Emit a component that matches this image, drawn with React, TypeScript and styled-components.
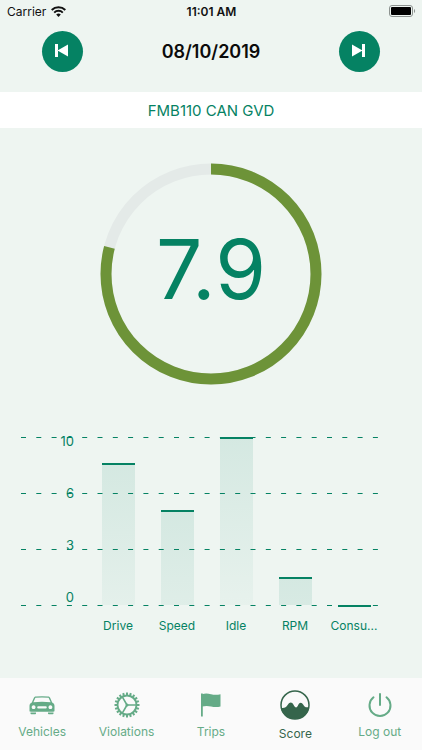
import React from "react";
import styled, { createGlobalStyle } from "styled-components";

const green = "#058263";
const mint = "#65ab87";
const forest = "#35654b";

const Global = createGlobalStyle`
  * { box-sizing: border-box; }
  body { margin: 0; background: #eef5f1; font-family: Inter, "Liberation Sans", sans-serif; }
  button { font: inherit; border: 0; padding: 0; cursor: pointer; }
`;

const Screen = styled.div`
  min-height: 100vh;
  display: flex;
  flex-direction: column;
  background: #eef5f1;
`;

const StatusBar = styled.div`
  display: grid;
  grid-template-columns: 1fr auto 1fr;
  align-items: center;
  height: 22px;
  padding: 0 6px 0 7px;
  font-size: 12px;
  color: #111;
`;

const Carrier = styled.span`
  display: flex;
  align-items: center;
  gap: 5px;
`;

const Clock = styled.span`
  font-weight: 600;
`;

const Battery = styled.svg`
  justify-self: end;
`;

const DateNav = styled.header`
  display: flex;
  justify-content: space-between;
  align-items: center;
  padding: 9px 42px 20px;
`;

const RoundButton = styled.button`
  width: 41px;
  height: 41px;
  border-radius: 50%;
  background: ${green};
  color: #fff;
  display: grid;
  place-items: center;
  padding: 0 2px 2px 0;
`;

const DateTitle = styled.h1`
  margin: 0;
  font-size: 18px;
  line-height: 24px;
  font-weight: 600;
  color: #0b0b0b;
`;

const DeviceName = styled.h2`
  margin: 0;
  padding-top: 2px;
  background: #fff;
  color: ${green};
  font-size: 15px;
  font-weight: 400;
  line-height: 34px;
  text-align: center;
`;

const Main = styled.main`
  flex: 1;
  display: flex;
  flex-direction: column;
  align-items: center;
  padding-top: 35px;
`;

const Gauge = styled.div`
  display: grid;
  place-items: center;
  > * { grid-area: 1 / 1; }
`;

const GaugeValue = styled.span`
  color: ${green};
  font-size: 82px;
  line-height: 96px;
  font-weight: 400;
  margin-bottom: 9px;
`;

const Chart = styled.svg`
  display: block;
  width: 100%;
  margin-top: 39px;
  font-size: 12px;
  fill: ${green};
`;

const AxisLabel = styled.text`
  font-size: 13px;
  text-anchor: end;
`;

const TabBar = styled.nav`
  display: grid;
  grid-template-columns: repeat(5, 1fr);
  height: 72px;
  background: #fafafa;
`;

const Tab = styled.button<{ $active?: boolean }>`
  display: flex;
  flex-direction: column;
  align-items: center;
  gap: ${(p) => (p.$active ? 6 : 4)}px;
  padding-top: 12px;
  background: none;
  color: ${(p) => (p.$active ? forest : mint)};
`;

const TabIcon = styled.span`
  display: grid;
  place-items: center;
  height: 30px;
`;

const TabLabel = styled.span`
  font-size: 12px;
  line-height: 16px;
`;

const bars = [
  { label: "Drive", top: 40 },
  { label: "Speed", top: 87 },
  { label: "Idle", top: 14 },
  { label: "RPM", top: 154 },
  { label: "Consu...", top: 182 },
];

const gridLines = [
  { y: 13, label: "10", labelY: 22 },
  { y: 69, label: "6", labelY: 74 },
  { y: 125, label: "3", labelY: 126 },
  { y: 181, label: "0", labelY: 178 },
];

const BarChart = () => (
  <Chart viewBox="0 0 422 215" role="img" aria-label="Score by category">
    <defs>
      {bars.map((b) => (
        <linearGradient
          key={b.label}
          id={`fade-${b.top}`}
          gradientUnits="userSpaceOnUse"
          x1="0"
          y1={b.top}
          x2="0"
          y2={b.top + 168}
        >
          <stop offset="0" stopColor={green} stopOpacity="0.11" />
          <stop offset="1" stopColor={green} stopOpacity="0.03" />
        </linearGradient>
      ))}
    </defs>
    {bars.map((b, i) => (
      <g key={b.label}>
        <rect x={102 + i * 59} y={b.top} width="33" height={Math.max(0, 181 - b.top)} fill={`url(#fade-${b.top})`} />
        <rect x={102 + i * 59} y={b.top - 1} width="33" height="2" />
        <text x={118 + i * 59} y="206" textAnchor="middle">{b.label}</text>
      </g>
    ))}
    {gridLines.map((g) => (
      <g key={g.y}>
        <path d={`M21 ${g.y}.5H378`} fill="none" stroke={green} strokeWidth="1" strokeDasharray="5 10.3" />
        <AxisLabel x="74" y={g.labelY}>{g.label}</AxisLabel>
      </g>
    ))}
  </Chart>
);

const radius = 105;
const circumference = 2 * Math.PI * radius;

const ScoreGauge = ({ value }: { value: number }) => (
  <Gauge>
    <svg width="222" height="222" viewBox="0 0 222 222" fill="none" strokeWidth="11">
      <circle cx="111" cy="111" r={radius} stroke="#e4eae8" />
      <circle
        cx="111"
        cy="111"
        r={radius}
        stroke="#6d9338"
        strokeDasharray={`${(circumference * value) / 10} ${circumference}`}
        transform="rotate(-90 111 111)"
      />
    </svg>
    <GaugeValue>{value}</GaugeValue>
  </Gauge>
);

const CarIcon = () => (
  <svg width="26" height="19" viewBox="0 0 26 19" fill="currentColor">
    <path fillRule="evenodd" d="M5 1.600C5.400.8 6 .5 7 .4Q13-.1 19 .4c1 .1 1.600.4 2 1.200l2.200 4.800C25 7.200 25.500 8.500 25.500 10v4.500c0 .8-.4 1.200-1.200 1.200H1.700C.9 15.700.5 15.300.5 14.500V10C.5 8.500 1 7.200 2.800 6.400ZM6.400 1.700 4.400 6.200Q13 5.400 21.600 6.200L19.600 1.700Q13 1.100 6.400 1.700ZM4.600 9.300a1.900 1.900 0 1 0 .01 0ZM21.400 9.300a1.900 1.900 0 1 0 .01 0ZM9.300 10.300a1 1 0 0 0 0 2.200h7.400a1 1 0 0 0 0-2.200Z" />
    <path d="M1.500 16.500h5.500v1c0 .5-.3.800-.8.800H2.300c-.5 0-.8-.3-.8-.8ZM19 16.500h5.500v1c0 .5-.3.800-.8.800h-3.900c-.5 0-.8-.3-.8-.8Z" />
  </svg>
);

const teeth = Array.from({ length: 20 }, (_, i) => i * 18);

const GearIcon = () => (
  <svg width="26" height="26" viewBox="-13 -13 26 26" fill="none" stroke="currentColor" strokeWidth="1.900">
    <circle r="9.500" />
    {teeth.map((a) => (
      <path key={a} d="M0-9.500V-12.500" strokeWidth="2" transform={`rotate(${a})`} />
    ))}
    <path d="M0 0H9.500M0 0-4.700-8.200M0 0-4.700 8.200" strokeWidth="1.600" />
    <circle r="1.500" fill="currentColor" stroke="none" />
  </svg>
);

const FlagIcon = () => (
  <svg width="20" height="24" viewBox="0 0 20 24" fill="currentColor">
    <path d="M0 .5h1.800v23H0Z" />
    <path d="M1 1.200C4 .2 7 .4 10 1.200s6 .8 9.500.1V13.600c-3.500.8-6.500.6-9.500-.1S4 12.800 1 13.600Z" />
  </svg>
);

const WaveIcon = () => (
  <svg width="30" height="30" viewBox="0 0 30 30">
    <circle cx="15" cy="15" r="14" fill="none" stroke="currentColor" strokeWidth="1.500" />
    <path fill="currentColor" d="M1 18C4.500 18.500 6 17.500 7.800 14.800 9.800 11.700 12 12 13.500 14.800c2 3.700 3.200 3.700 4.800 0 1.200-2.800 3.500-2.800 5 0C24.800 17.500 26 17.600 29 17.200 28 25 22 29 15 29S2.500 25 1 18Z" />
  </svg>
);

const PowerIcon = () => (
  <svg width="26" height="26" viewBox="0 0 26 26" fill="none" stroke="currentColor" strokeWidth="2" strokeLinecap="round">
    <path d="M13 2V13M6.500 5.300A10.500 10.500 0 1 0 19.500 5.300" />
  </svg>
);

const SkipIcon = ({ forward }: { forward?: boolean }) => (
  <svg width="13" height="13" viewBox="0 0 13 13" fill="currentColor">
    <path d={forward ? "M0 0.500 10.500 6.500 0 12.500ZM10 0h3v13h-3Z" : "M13 0.500 2.500 6.500 13 12.500ZM0 0h3v13H0Z"} />
  </svg>
);

const tabs = [
  { label: "Vehicles", Icon: CarIcon },
  { label: "Violations", Icon: GearIcon },
  { label: "Trips", Icon: FlagIcon },
  { label: "Score", Icon: WaveIcon, active: true },
  { label: "Log out", Icon: PowerIcon },
];

export default function App() {
  return (
    <Screen>
      <Global />
      <StatusBar>
        <Carrier>
          Carrier
          <svg width="15" height="11" viewBox="0 0 15 11" fill="none" stroke="#111" strokeWidth="2">
            <path d="M.7 4a9.700 9.700 0 0 1 13.600 0M3.200 6.600a6.200 6.200 0 0 1 8.600 0" />
            <path d="M5.200 8.500a3.300 3.300 0 0 1 4.600 0L7.500 10.900Z" fill="#111" stroke="none" />
          </svg>
        </Carrier>
        <Clock>11:01 AM</Clock>
        <Battery width="27" height="12" viewBox="0 0 27 12">
          <rect x=".5" y=".5" width="23" height="11" rx="2.500" fill="none" stroke="#8d9390" />
          <rect x="2" y="2" width="20" height="8" rx="1" fill="#000" />
          <path d="M25 4c1.500.5 1.500 3.500 0 4Z" fill="#8d9390" />
        </Battery>
      </StatusBar>
      <DateNav>
        <RoundButton aria-label="Previous day"><SkipIcon /></RoundButton>
        <DateTitle>08/10/2019</DateTitle>
        <RoundButton aria-label="Next day"><SkipIcon forward /></RoundButton>
      </DateNav>
      <DeviceName>FMB110 CAN GVD</DeviceName>
      <Main>
        <ScoreGauge value={7.9} />
        <BarChart />
      </Main>
      <TabBar>
        {tabs.map(({ label, Icon, active }) => (
          <Tab key={label} $active={active} aria-current={active ? "page" : undefined}>
            <TabIcon><Icon /></TabIcon>
            <TabLabel>{label}</TabLabel>
          </Tab>
        ))}
      </TabBar>
    </Screen>
  );
}
